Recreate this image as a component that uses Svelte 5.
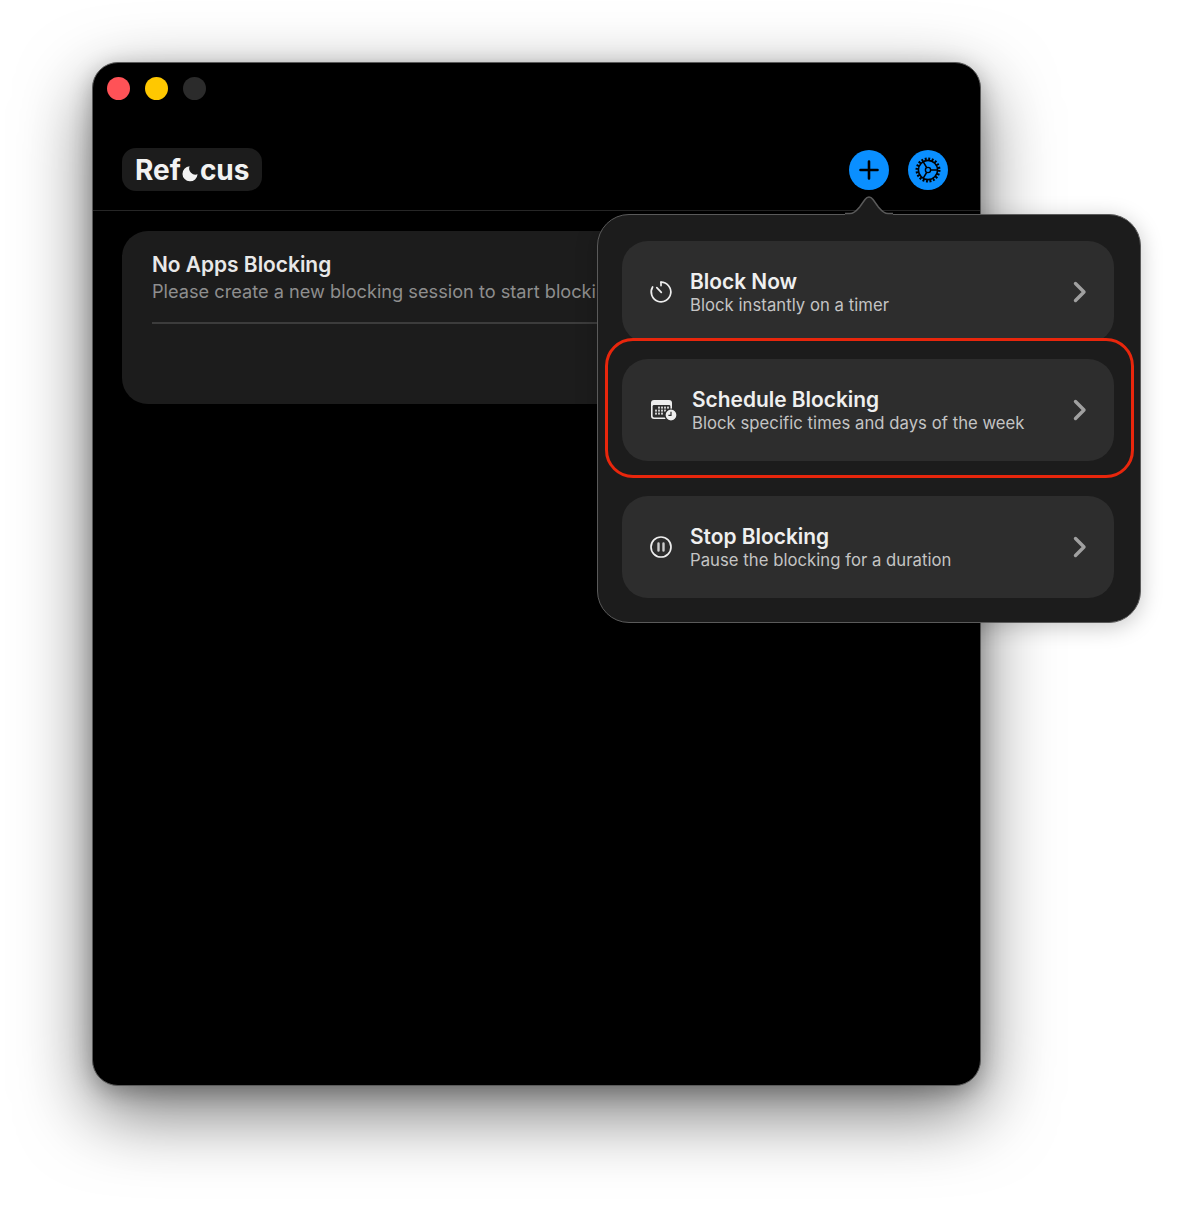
<script>
    const actions = [
        { title: 'Block Now', sub: 'Block instantly on a timer', icon: 'timer' },
        { title: 'Schedule Blocking', sub: 'Block specific times and days of the week', icon: 'calendar' },
        { title: 'Stop Blocking', sub: 'Pause the blocking for a duration', icon: 'pause' }
    ];
</script>

<div class="page">
    <div class="window">
        <div class="lights">
            <span class="light red"></span>
            <span class="light yellow"></span>
            <span class="light off"></span>
        </div>

        <header>
            <div class="logo">Ref<svg class="logo-o" viewBox="0 0 20 20" width="18" height="18"><path d="M9.5 2.5A8.4 8.4 0 1 0 18.4 11.5A7 7 0 0 1 9.5 2.5Z" fill="#f2f2f2"/></svg>cus</div>
            <div class="tools">
                <button class="round" aria-label="New">
                    <svg viewBox="0 0 40 40" width="40" height="40"><path d="M20 11.5v17M11.5 20h17" stroke="#000" stroke-width="2.6" stroke-linecap="round"/></svg>
                </button>
                <button class="round" aria-label="Settings">
                    <svg viewBox="0 0 40 40" width="40" height="40" fill="none" stroke="#000">
                        <circle cx="20" cy="20" r="11" stroke-width="3" stroke-dasharray="1.9 1.55"/>
                        <circle cx="20" cy="20" r="9.6" stroke-width="1.6"/>
                        <circle cx="20" cy="20" r="2.6" stroke-width="1.4"/>
                        <path d="M22.6 20H30M18.7 17.7 15 11.4M18.7 22.3 15 28.6" stroke-width="1.6"/>
                    </svg>
                </button>
            </div>
        </header>

        <section class="card">
            <h2>No Apps Blocking</h2>
            <p>Please create a new blocking session to start blocking apps</p>
            <hr />
        </section>
    </div>

    <div class="popover">
        <svg class="notch" viewBox="0 0 48 20" width="48" height="20">
            <path d="M0 18.5H5C10 18.5 12 15 15 11.5L20 4.5C22.5 1 25.5 1 28 4.5L33 11.5C36 15 38 18.5 43 18.5H48V20H0Z" fill="#1c1c1c"/>
            <path d="M0 18.5H5C10 18.5 12 15 15 11.5L20 4.5C22.5 1 25.5 1 28 4.5L33 11.5C36 15 38 18.5 43 18.5H48" fill="none" stroke="#5a5a5a" stroke-width="1.5"/>
        </svg>
        {#each actions as a}
            <div class="row {a.icon}">
                <div class="item">
                    <span class="icon">
                        {#if a.icon === 'timer'}
                            <svg viewBox="0 0 24 24" width="24" height="24" fill="none" stroke="#eee" stroke-width="1.7" stroke-linecap="round">
                                <path d="M12 2.2A9.8 9.8 0 1 1 3.6 7"/>
                                <path d="M12 2.2V5.6M12.3 12.4 7.8 7.6"/>
                            </svg>
                        {:else if a.icon === 'calendar'}
                            <svg viewBox="0 0 28 24" width="28" height="24">
                                <rect x="1" y="2" width="21" height="19" rx="3" fill="#eee"/>
                                <rect x="2.6" y="7" width="17.8" height="12.4" rx="1.4" fill="#2d2d2d"/>
                                <g fill="#ccc">
                                    <rect x="8" y="8.6" width="2" height="2"/><rect x="11" y="8.6" width="2" height="2"/><rect x="14" y="8.6" width="2" height="2"/><rect x="17" y="8.6" width="2" height="2"/>
                                    <rect x="5" y="11.6" width="2" height="2"/><rect x="8" y="11.6" width="2" height="2"/><rect x="11" y="11.6" width="2" height="2"/><rect x="14" y="11.6" width="2" height="2"/>
                                    <rect x="5" y="14.6" width="2" height="2"/><rect x="8" y="14.6" width="2" height="2"/><rect x="11" y="14.6" width="2" height="2"/>
                                </g>
                                <circle cx="21" cy="17" r="6" fill="#eee" stroke="#2d2d2d" stroke-width="1.2"/>
                                <path d="M21 13.8V17.4H18.4" fill="none" stroke="#2d2d2d" stroke-width="1.2"/>
                            </svg>
                        {:else}
                            <svg viewBox="0 0 24 24" width="24" height="24" fill="none" stroke="#eee">
                                <circle cx="12" cy="12" r="10" stroke-width="1.7"/>
                                <path d="M9.5 8.5v7M14.5 8.5v7" stroke="#ccc" stroke-width="2.4" stroke-linecap="round"/>
                            </svg>
                        {/if}
                    </span>
                    <span class="text">
                        <strong>{a.title}</strong>
                        <small>{a.sub}</small>
                    </span>
                    <svg class="chev" viewBox="0 0 16 24" width="16" height="24" fill="none"><path d="M3.5 3.5l8.5 8.5-8.5 8.5" stroke="#a0a0a0" stroke-width="3.4" stroke-linecap="round" stroke-linejoin="round"/></svg>
                </div>
            </div>
        {/each}
    </div>
</div>

<style>
    :global(body) {
        background: #fff;
    }

    .page {
        position: relative;
        height: 1208px;
        padding: 62px 0 0 92px;
        box-sizing: border-box;
        font-family: Inter, "Liberation Sans", sans-serif;
    }

    .window {
        width: 889px;
        height: 1024px;
        box-sizing: border-box;
        background: #000;
        border: 1.5px solid #5a5a5a;
        border-radius: 26px;
        box-shadow: 0 26px 72px rgba(0, 0, 0, .55), 0 6px 22px rgba(0, 0, 0, .25);
    }

    .lights {
        display: flex;
        gap: 15px;
        padding: 14px 0 0 14px;
    }

    .light {
        width: 23px;
        height: 23px;
        border-radius: 50%;
    }

    .red { background: #ff5257; }
    .yellow { background: #ffc800; }
    .off { background: #2b2b2b; }

    header {
        display: flex;
        align-items: center;
        justify-content: space-between;
        height: 99px;
        margin-top: 12px;
        padding: 17px 32px 0 29px;
        box-sizing: border-box;
        border-bottom: 1px solid #262626;
    }

    .logo {
        display: flex;
        align-items: center;
        height: 43px;
        padding: 0 13px;
        background: #1c1c1c;
        border-radius: 14px;
        color: #f2f2f2;
        font-size: 28px;
        font-weight: 700;
    }

    .logo-o {
        margin: 6px 1px 0 0;
    }

    .tools {
        display: flex;
        gap: 19px;
    }

    .round {
        width: 40px;
        height: 40px;
        padding: 0;
        border: 0;
        border-radius: 50%;
        background: #0a8fff;
    }

    .round svg {
        display: block;
    }

    .card {
        margin: 20px 29px 0;
        height: 173px;
        box-sizing: border-box;
        padding: 21px 30px 0;
        background: #1c1c1c;
        border-radius: 26px;
    }

    h2 {
        margin: 0;
        color: #e8e8e8;
        font-size: 20.9px;
        font-weight: 600;
        line-height: 26px;
    }

    .card p {
        margin: 1px 0 0;
        color: #8e8e8e;
        font-size: 18.2px;
        line-height: 24px;
        white-space: nowrap;
        overflow: hidden;
    }

    hr {
        margin: 19px 0 0;
        border: 0;
        border-top: 2px solid #3c3c3c;
    }

    .popover {
        position: absolute;
        left: 597px;
        top: 214px;
        width: 544px;
        height: 409px;
        box-sizing: border-box;
        padding: 26px 26px 0 24px;
        display: flex;
        flex-direction: column;
        background: #1c1c1c;
        border: 1.5px solid #5a5a5a;
        border-radius: 32px;
        box-shadow: 0 4px 22px rgba(0, 0, 0, .22);
    }

    .notch {
        position: absolute;
        left: 246.5px;
        top: -19.75px;
    }

    .row.calendar {
        position: relative;
        margin: -5px -20px 18px -17px;
        padding: 18px 17px 14px 14px;
        background: #1c1c1c;
        border: 3px solid #e8260c;
        border-radius: 28px;
    }

    .item {
        display: flex;
        align-items: center;
        height: 102px;
        padding: 0 26px 0 27px;
        box-sizing: border-box;
        background: #2d2d2d;
        border-radius: 26px;
    }

    .icon {
        display: flex;
        width: 40px;
        margin-right: 1px;
    }

    .calendar .icon {
        margin: 0 2px 0 1px;
    }

    .text {
        display: flex;
        flex-direction: column;
        flex: 1;
    }

    strong {
        color: #efefef;
        font-size: 20.9px;
        font-weight: 600;
        line-height: 27px;
    }

    small {
        color: #c4c4c4;
        font-size: 16.65px;
        letter-spacing: .05px;
        line-height: 21px;
    }
</style>
